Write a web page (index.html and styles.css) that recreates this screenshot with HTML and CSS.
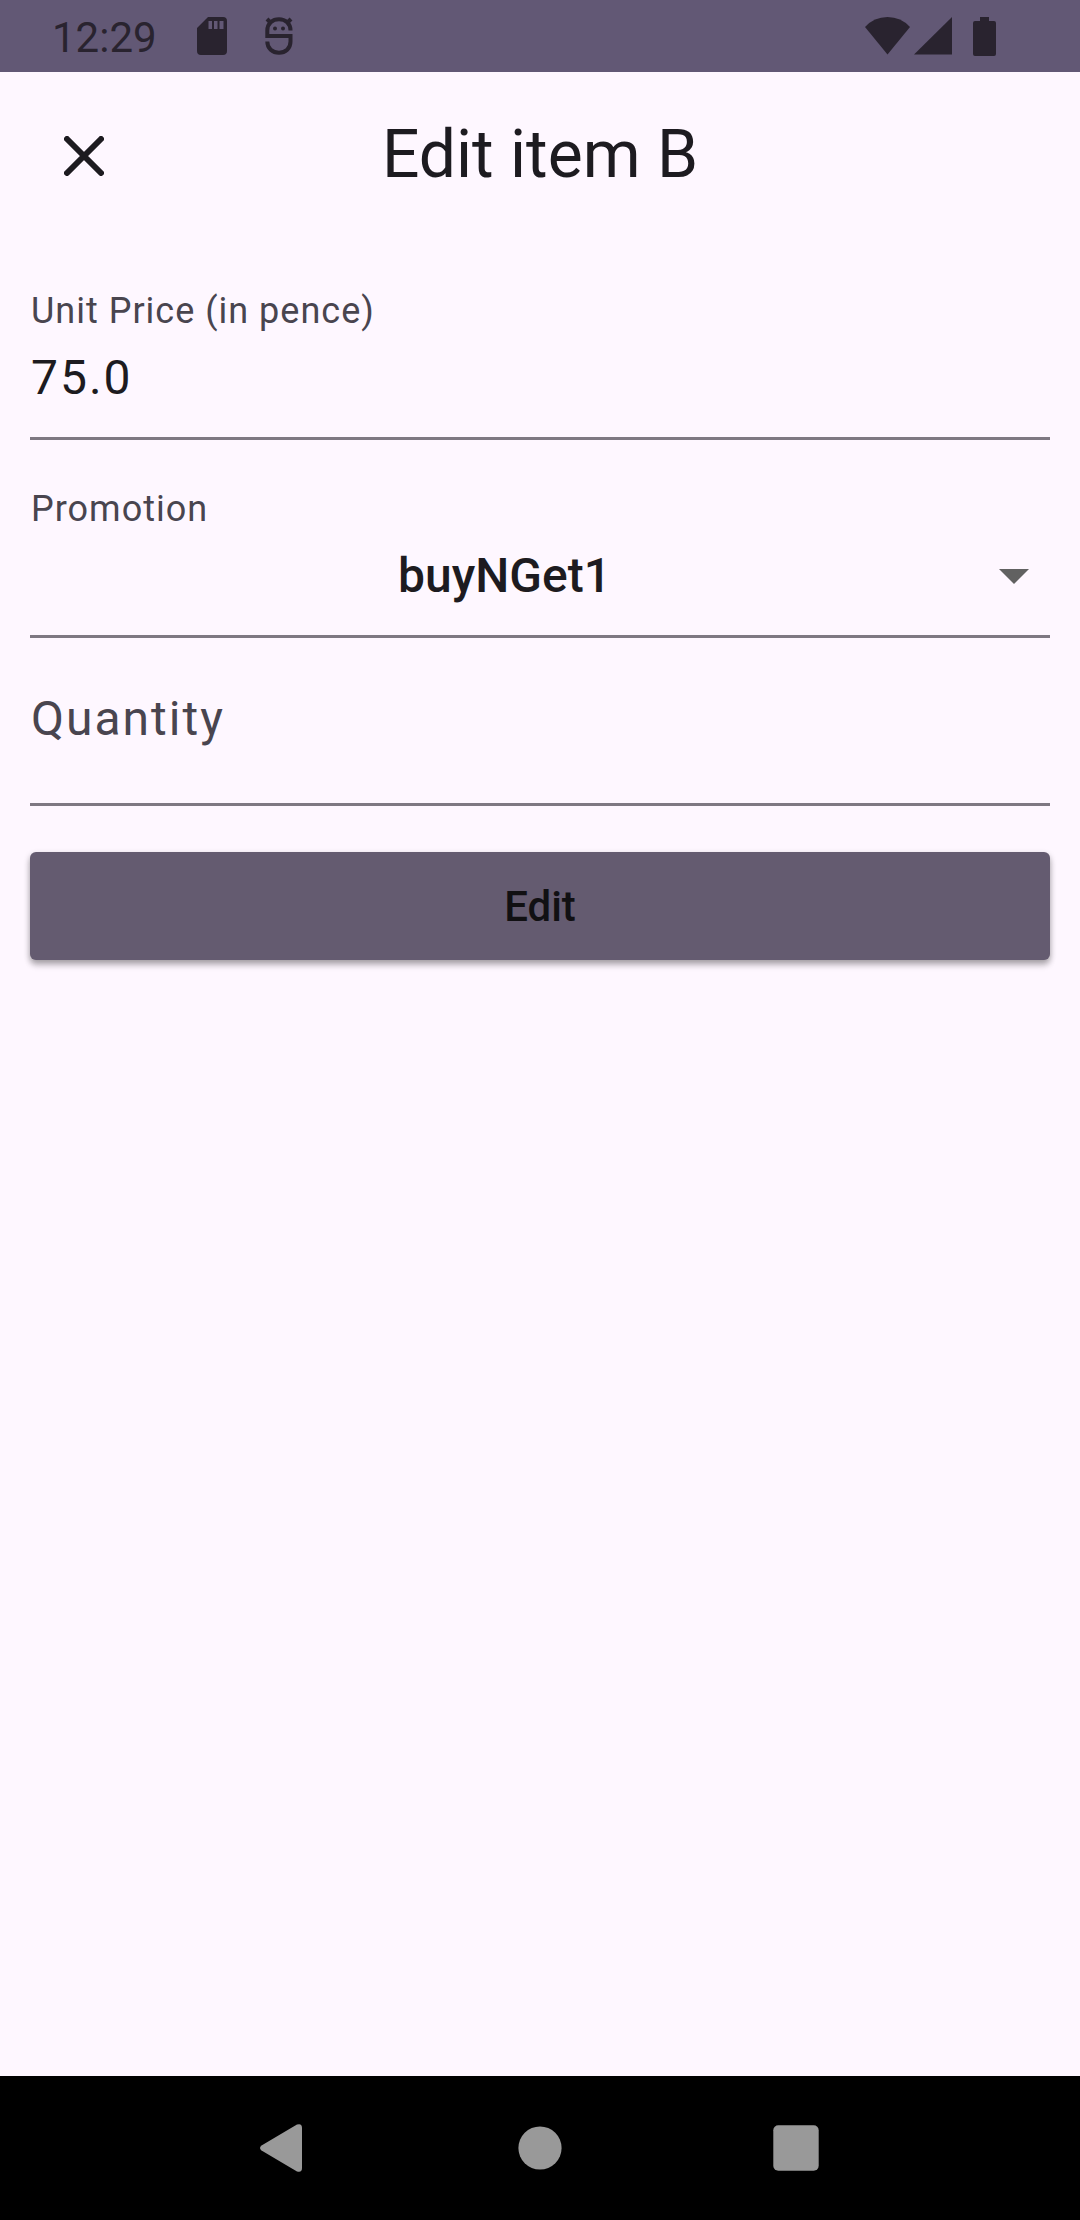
FILE: index.html
```html
<!DOCTYPE html>
<html lang="en">
<head>
<meta charset="utf-8">
<meta name="viewport" content="width=device-width, initial-scale=1">
<title>Edit item B</title>
<link rel="stylesheet" href="styles.css">
</head>
<body>
<div class="status-bar">
  <div class="status-left">
    <span class="clock">12:29</span>
    <svg class="icon-sd" width="30" height="38" viewBox="0 0 30 38" aria-hidden="true">
      <path fill="currentColor" fill-rule="evenodd" d="M11 0H26a4 4 0 0 1 4 4V34a4 4 0 0 1-4 4H4a4 4 0 0 1-4-4V11ZM11.500 4V12H15V4ZM17 4V12H20.500V4ZM22.500 4V12H26.500V4Z"/>
    </svg>
    <svg width="28" height="38" viewBox="0 0 28 38" aria-hidden="true">
      <g fill="none" stroke="currentColor" stroke-width="4">
        <path d="M25.500 13.500C25.500 6.500 20.500 2.300 14 2.300S2.300 6.500 2.300 13.500V19H25.500V24.500C25.500 31.500 20.500 35.800 14 35.800S2.300 31.500 2.300 24.500"/>
        <path d="M2 2L6 6M26 2L22 6"/>
      </g>
      <circle cx="10" cy="11.500" r="2" fill="currentColor"/>
      <circle cx="18" cy="11.500" r="2" fill="currentColor"/>
    </svg>
  </div>
  <div class="status-right">
    <svg width="45" height="38" viewBox="0 0 45 38" aria-hidden="true"><path fill="currentColor" d="M0 10Q9 0 22.500 0T45 10L22.500 37.500Z"/></svg>
    <svg width="38" height="38" viewBox="0 0 38 38" aria-hidden="true"><path fill="currentColor" d="M38 0V37.500H0Z"/></svg>
    <svg class="icon-battery" width="23" height="39" viewBox="0 0 23 39" aria-hidden="true"><path fill="currentColor" d="M7 0H16V4H21a2 2 0 0 1 2 2V37a2 2 0 0 1-2 2H2a2 2 0 0 1-2-2V6a2 2 0 0 1 2-2H7Z"/></svg>
  </div>
</div>

<header class="app-bar">
  <button class="close" type="button" aria-label="Close">
    <svg width="40" height="40" viewBox="0 0 40 40" aria-hidden="true"><path fill="none" stroke="currentColor" stroke-width="6" stroke-linecap="round" d="M3 3L37 37M37 3L3 37"/></svg>
  </button>
  <h1 class="title">Edit item B</h1>
</header>

<main class="content">
  <form class="form">
    <div class="field">
      <label class="label" for="price">Unit Price (in pence)</label>
      <input class="control" id="price" type="text" inputmode="decimal" value="75.0">
    </div>
    <div class="field">
      <label class="label" for="promotion">Promotion</label>
      <div class="picker">
        <select class="control select" id="promotion">
          <option>buyNGet1</option>
        </select>
        <svg class="arrow" width="30" height="15" viewBox="0 0 30 15" aria-hidden="true"><path fill="currentColor" d="M0 0H30L15 15Z"/></svg>
      </div>
    </div>
    <div class="field field-empty">
      <label class="label label-resting" for="quantity">Quantity</label>
      <input class="control" id="quantity" type="text" inputmode="numeric">
    </div>
    <button class="submit" type="button">Edit</button>
  </form>
</main>

<nav class="nav-bar" aria-label="System navigation">
  <button class="nav-button" type="button" aria-label="Back">
    <svg width="48" height="48" viewBox="0 0 48 48" aria-hidden="true"><path fill="currentColor" d="M1.500 21.500L37 .6Q42 -1 42 4V44Q42 49 37 47.400L1.500 26.500Q-1.500 24 1.500 21.500Z"/></svg>
  </button>
  <button class="nav-button" type="button" aria-label="Home">
    <svg width="48" height="48" viewBox="0 0 48 48" aria-hidden="true"><circle cx="24" cy="24" r="21.600" fill="currentColor"/></svg>
  </button>
  <button class="nav-button" type="button" aria-label="Recent apps">
    <svg width="48" height="48" viewBox="0 0 48 48" aria-hidden="true"><rect x="1.300" y="1.300" width="45.400" height="45.400" rx="5" fill="currentColor"/></svg>
  </button>
</nav>
</body>
</html>
```
FILE: styles.css
```css
* {
  box-sizing: border-box;
}

body {
  margin: 0;
  min-height: 100vh;
  display: flex;
  flex-direction: column;
  background: #fef7ff;
  color: #1d1b20;
  font-family: Roboto, sans-serif;
}

svg {
  display: block;
  flex: none;
}

button,
input,
select {
  font: inherit;
  color: inherit;
}

button {
  border: 0;
  padding: 0;
  background: none;
}

.status-bar {
  display: flex;
  justify-content: space-between;
  height: 72px;
  padding: 0 84px 0 52px;
  background: #625875;
  color: #29232f;
}

.status-left,
.status-right {
  display: flex;
  align-items: center;
}

.clock {
  padding-top: 3px;
  font-size: 42px;
  line-height: 48px;
}

.icon-sd {
  margin: 0 38px 0 40px;
}

.status-right {
  gap: 4px;
}

.icon-battery {
  margin-left: 17px;
}

.app-bar {
  display: grid;
  grid-template-columns: 168px 1fr 168px;
  align-items: center;
  height: 168px;
}

.close {
  display: grid;
  place-items: center;
  height: 144px;
}

.title {
  margin: 0;
  padding-bottom: 3px;
  font-size: 66px;
  font-weight: 400;
  line-height: 84px;
  text-align: center;
}

.content {
  flex: 1;
  padding: 32px 30px;
}

.form {
  display: flex;
  flex-direction: column;
  gap: 30px;
}

.field {
  display: grid;
  gap: 18px;
  padding: 18px 0 31px;
  border-bottom: 3px solid #7e7882;
}

.label {
  padding-left: 1px;
  font-size: 36px;
  line-height: 42px;
  letter-spacing: 1px;
  color: #49454f;
}

.control {
  width: 100%;
  height: 56px;
  border: 0;
  padding: 0 0 0 1px;
  background: none;
  font-size: 48px;
  line-height: 56px;
  letter-spacing: 2px;
  outline: none;
}

.picker,
.field-empty {
  display: grid;
}

.picker > *,
.field-empty > * {
  grid-area: 1 / 1;
}

.select {
  appearance: none;
  padding-right: 72px;
  font-weight: 500;
  letter-spacing: 0;
  text-align-last: center;
}

.arrow {
  place-self: center end;
  margin-right: 21px;
  color: #616161;
  pointer-events: none;
}

.field-empty {
  padding: 23px 0 56px;
}

.label-resting {
  font-size: 48px;
  line-height: 56px;
  letter-spacing: 2px;
}

.submit {
  height: 108px;
  margin-top: 16px;
  border-radius: 6px;
  background: #645b70;
  color: #111013;
  box-shadow: 0 3px 6px rgba(0, 0, 0, 0.3), 0 6px 6px rgba(0, 0, 0, 0.12);
  font-size: 42px;
  font-weight: 500;
}

.nav-bar {
  display: flex;
  justify-content: center;
  height: 144px;
  background: #000;
  color: #999;
}

.nav-button {
  display: grid;
  place-items: center;
  width: 256px;
}
```
